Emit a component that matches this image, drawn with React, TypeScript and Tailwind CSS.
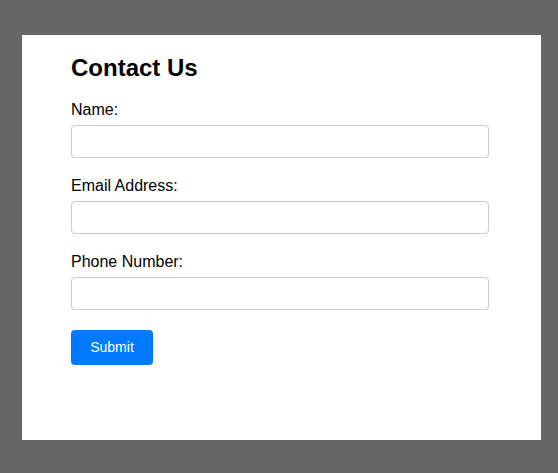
export default function App() {
    const fields = ['Name:', 'Email Address:', 'Phone Number:'];

    return (
        <div className="min-h-screen bg-[#666666] pt-[35px] pl-[22px] font-['Liberation_Sans',Arial,sans-serif]">
            <div className="w-[519px] h-[405px] bg-white pt-[19px] pl-[49px]">
                {/* Header */}
                <h2 className="text-[24px] leading-[27px] font-bold text-black mb-[20px]">Contact Us</h2>

                <form onSubmit={e => e.preventDefault()}>
                    {fields.map(label => (
                        <div key={label} className="mb-[19px]">
                            <label className="block text-[16px] leading-[18px] text-black mb-[6px]">{label}</label>
                            <input
                                type="text"
                                className="block w-[418px] h-[33px] rounded-[4px] border border-[#cccccc] bg-white px-2 text-[16px] outline-none"
                            />
                        </div>
                    ))}

                    <button
                        type="submit"
                        className="mt-px w-[82px] h-[35px] rounded-[4px] bg-[#007bff] text-white text-[14px]"
                    >
                        Submit
                    </button>
                </form>
            </div>
        </div>
    );
}
